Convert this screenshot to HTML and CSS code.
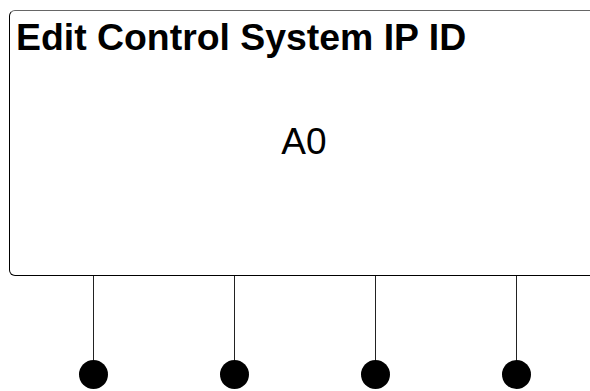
FILE: index.html
```html
<!DOCTYPE html>
<html>
<head>
<meta charset="utf-8">
<link rel="stylesheet" href="styles.css">
</head>
<body>
<div class="page">
  <div class="screen">
    <div class="title">Edit Control System IP ID</div>
    <div class="value">A0</div>
  </div>
  <div class="keys">
    <div class="key"><div class="stem"></div><div class="knob"></div></div>
    <div class="key"><div class="stem"></div><div class="knob"></div></div>
    <div class="key"><div class="stem"></div><div class="knob"></div></div>
    <div class="key"><div class="stem"></div><div class="knob"></div></div>
  </div>
</div>
</body>
</html>
```
FILE: styles.css
```css
html, body {
  margin: 0;
  padding: 0;
  background: #fff;
  overflow: hidden;
  width: 590px;
  height: 391px;
}
.page {
  font-family: "Liberation Sans", Arial, sans-serif;
  color: #000;
  padding-top: 10px;
}
.screen {
  margin-left: 9px;
  width: 600px;
  height: 266px;
  box-sizing: border-box;
  border: 1.5px solid #000;
  border-top-color: #666;
  border-radius: 6px;
  display: flex;
  flex-direction: column;
}
.title {
  font-weight: bold;
  font-size: 37.4px;
  line-height: 42px;
  padding-left: 6px;
  padding-top: 4.5px;
  white-space: nowrap;
}
.value {
  font-size: 37px;
  line-height: 42px;
  padding-top: 63px;
  width: 588px;
  text-align: center;
}
.keys {
  display: grid;
  grid-template-columns: repeat(4, 141px);
  padding-left: 23px;
}
.key {
  display: flex;
  flex-direction: column;
  align-items: center;
}
.stem {
  width: 1px;
  height: 85px;
  background: #222;
}
.knob {
  width: 29px;
  height: 29px;
  border-radius: 50%;
  background: #000;
  margin-top: -1px;
}
```
